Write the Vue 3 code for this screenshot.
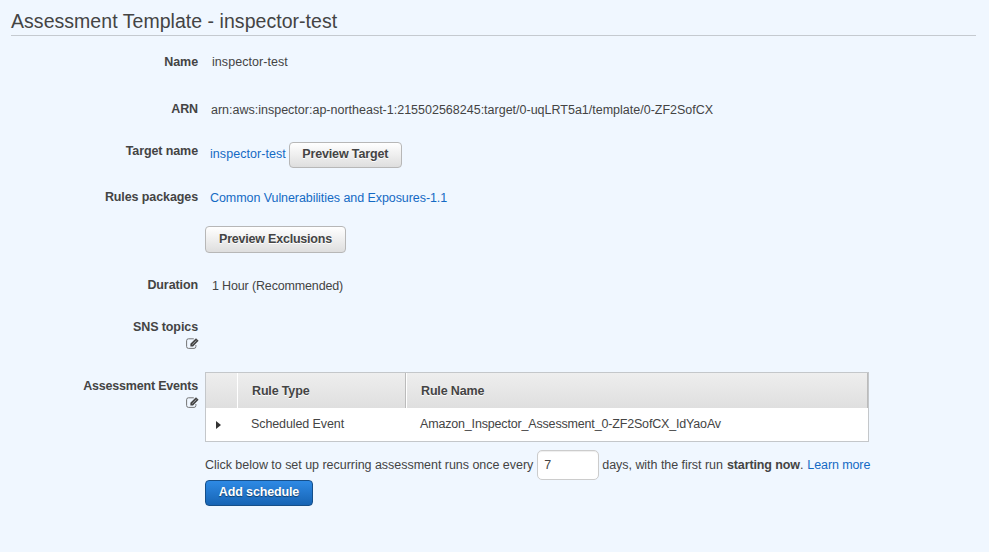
<script setup>
import { ref } from 'vue'

const days = ref('7')
const events = [{ type: 'Scheduled Event', name: 'Amazon_Inspector_Assessment_0-ZF2SofCX_IdYaoAv' }]
</script>

<template>
  <main class="panel">
    <h1 class="title"><span>Assessment Template - inspector-test</span></h1>

    <div class="row row-name">
      <div class="label">Name</div>
      <div class="value v-name">inspector-test</div>
    </div>
    <div class="row row-arn">
      <div class="label">ARN</div>
      <div class="value v-arn">arn:aws:inspector:ap-northeast-1:215502568245:target/0-uqLRT5a1/template/0-ZF2SofCX</div>
    </div>
    <div class="row row-target">
      <div class="label l-target">Target name</div>
      <div class="value v-target"><a class="t-link">inspector-test</a><button class="btn b-target">Preview Target</button></div>
    </div>
    <div class="row row-rules">
      <div class="label">Rules packages</div>
      <div class="value v-rules"><a>Common Vulnerabilities and Exposures-1.1</a></div>
    </div>
    <div class="row row-exclusions">
      <div class="label"></div>
      <div><button class="btn b-excl">Preview Exclusions</button></div>
    </div>
    <div class="row row-duration">
      <div class="label">Duration</div>
      <div class="value v-duration">1 Hour (Recommended)</div>
    </div>
    <div class="row row-sns">
      <div class="label">
        <span>SNS topics</span>
        <svg class="edit" viewBox="0 0 13 11"><path d="M9.9 7v1.500a1.900 1.900 0 0 1-1.900 1.900H2.500A1.900 1.900 0 0 1 .6 8.500V2.700A1.900 1.900 0 0 1 2.500.8h5.300" fill="none" stroke="#666" stroke-width=".9" /><path d="M4.400 8.400V5.800L10 .3l2.600 2.500L7 8.400z" fill="#444" /><path d="M6.200 6.600l4.200-4.100" stroke="#dbe1e7" stroke-width=".6" /></svg>
      </div>
    </div>
    <div class="row row-events">
      <div class="label">
        <span class="l-events">Assessment Events</span>
        <svg class="edit" viewBox="0 0 13 11"><path d="M9.900 7v1.500a1.900 1.900 0 0 1-1.900 1.900H2.500A1.900 1.900 0 0 1 .6 8.500V2.700A1.900 1.900 0 0 1 2.500.8h5.300" fill="none" stroke="#666" stroke-width=".9" /><path d="M4.400 8.400V5.800L10 .3l2.600 2.500L7 8.400z" fill="#444" /><path d="M6.200 6.600l4.200-4.100" stroke="#dbe1e7" stroke-width=".6" /></svg>
      </div>
      <div class="events">
        <div class="table">
          <div class="thead">
            <div class="c1"></div>
            <div class="c2"><span>Rule Type</span></div>
            <div class="c3"><span>Rule Name</span></div>
          </div>
          <div v-for="e in events" :key="e.name" class="tr">
            <div class="d1"><svg width="5" height="8" viewBox="0 0 5 8"><path d="M0 0L5 4L0 8z" fill="#333" /></svg></div>
            <div class="d2"><span>{{ e.type }}</span></div>
            <div class="d3"><span>{{ e.name }}</span></div>
          </div>
        </div>
        <div class="schedule">
          <span class="s1">Click below to set up recurring assessment runs once every</span>
          <input v-model="days" class="days" />
          <span class="s2">days, with the first run</span>
          <b class="s3">starting now</b><span class="s4">.</span>
          <a class="s5">Learn more</a>
        </div>
        <button class="btn primary">Add schedule</button>
      </div>
    </div>
  </main>
</template>

<style>
html, body { background: #fff; }
</style>

<style scoped>
* { box-sizing: border-box; }
.panel {
  width: 989px;
  height: 552px;
  padding: 10px 13px 0 11px;
  overflow: hidden;
  background: #f0f7ff;
  color: #444;
  font: 12.5px/16px "Liberation Sans", Arial, sans-serif;
  white-space: nowrap;
}
.title {
  height: 26px;
  margin: 0;
  border-bottom: 1px solid #c5cad0;
  font-size: 19.5px;
  font-weight: 400;
  letter-spacing: .04px;
  line-height: 22px;
}
.row { display: grid; grid-template-columns: 187px 664px; column-gap: 7px; }
.row-name { height: 47px; margin-top: 18px; }
.row-arn { height: 43px; }
.row-target { height: 45px; }
.row-rules { height: 37px; }
.row-exclusions { height: 51px; }
.row-duration { height: 42px; }
.row-sns { height: 59px; }
.label { display: flex; flex-direction: column; align-items: flex-end; font-weight: 700; letter-spacing: -.1px; }
.l-target { margin-top: -1px; }
.l-events { letter-spacing: -.2px; }
.value { padding-left: 7px; }
.v-name { letter-spacing: .05px; }
.v-arn, .v-duration { padding-top: 1px; }
.v-arn { padding-left: 6px; }
.v-duration { letter-spacing: -.15px; }
.v-target { display: flex; height: 27px; margin-top: -2px; padding-left: 5px; }
.t-link { padding-top: 4px; letter-spacing: .05px; }
.v-rules { padding-left: 5px; padding-top: 1px; letter-spacing: -.07px; }
a { color: #146ac4; text-decoration: none; }
.btn {
  height: 27px;
  padding: 0;
  border: 1px solid #b7b7b7;
  border-radius: 4px;
  background: linear-gradient(#fff, #dedede);
  color: #444;
  font: 700 12.5px/23px "Liberation Sans", Arial, sans-serif;
  letter-spacing: -.14px;
  text-align: center;
  text-shadow: 0 1px 0 #fff;
}
.b-target { width: 113px; height: 26px; margin-left: 3px; padding-bottom: 1px; }
.b-excl { display: block; width: 141px; letter-spacing: -.21px; }
.edit { width: 13px; height: 11px; margin: 3px -1px 0 0; }
.events { margin-top: -6px; }
.table { height: 70px; border: 1px solid #c4c7ca; background: #fff; }
.thead { display: flex; height: 35px; background: linear-gradient(#eee, #dfdfdf); border-right: 1px solid #bbb; font-weight: 700; letter-spacing: -.15px; line-height: 36px; text-shadow: 0 1px 0 #fff; }
.c1 { width: 32px; border-right: 1px solid #fff; }
.c2 { width: 168px; padding-left: 14px; border-right: 1px solid #bbb; }
.c3 { flex: 1; padding-left: 14px; border-left: 1px solid #fff; }
.tr { display: flex; height: 33px; line-height: 32px; }
.d1 { width: 32px; padding: 13px 0 0 10px; line-height: 0; }
.d2 { width: 169px; padding-left: 13px; letter-spacing: -.1px; }
.d3 { padding-left: 13px; letter-spacing: -.17px; }
.schedule { display: flex; align-items: center; height: 30px; margin-top: 8px; }
.s1 { letter-spacing: -.03px; }
.days { width: 62px; height: 30px; margin: 0 3px 0 4px; padding: 0 0 0 6px; border: 1px solid #ccc; border-radius: 5px; background: #fff; color: #444; font: inherit; outline: 0; box-shadow: inset 0 1px 1px #eee; }
.s2 { letter-spacing: -.04px; }
.s3 { margin-left: 4px; letter-spacing: -.11px; }
.s5 { margin-left: 4px; letter-spacing: -.1px; }
.primary { display: block; width: 108px; height: 26px; padding-bottom: 2px; border-color: #164f89; background: linear-gradient(#2e8ae5, #1764b4); color: #fff; text-shadow: 0 1px 1px #123c66; }
</style>
